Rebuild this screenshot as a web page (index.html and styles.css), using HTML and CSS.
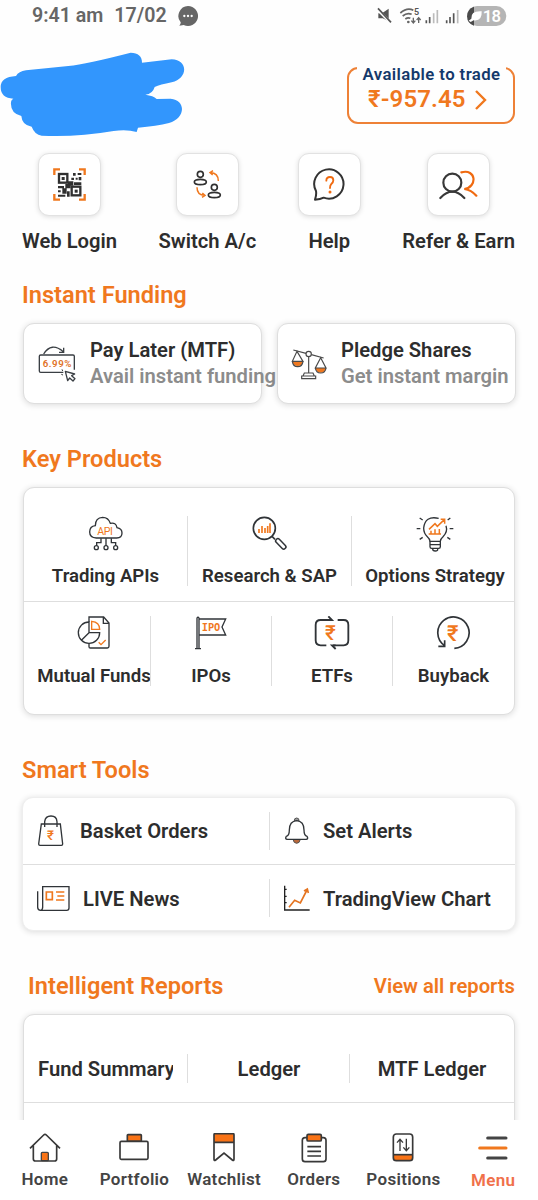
FILE: index.html
```html
<!DOCTYPE html>
<html lang="en">
<head>
    <meta charset="UTF-8">
    <meta name="viewport" content="width=device-width, initial-scale=1">
    <title>Menu</title>
    <link rel="stylesheet" href="styles.css">
</head>
<body>

<main class="screen">
    <!-- Status bar -->
    <div class="status-bar">
        <span class="time">9:41 am</span>
        <span class="date">17/02</span>
        <svg class="chat" width="20" height="20" viewBox="0 0 60 60">
            <path d="M30 0a30 30 0 1 1-13 57L4 59q5-6 4-10A30 30 0 0 1 30 0z" fill="#666"/>
            <g fill="#fff"><circle cx="19" cy="30" r="3.5"/><circle cx="30" cy="30" r="3.5"/><circle cx="41" cy="30" r="3.5"/></g>
        </svg>
        <svg class="signals" width="130" height="22" viewBox="0 0 390 66">
            <g fill="#555">
                <path d="M4 25h11l20-14v38L17 40H4z"/>
                <path d="M0 12l42 42" stroke="#fff" stroke-width="9"/>
                <path d="M3 10l39 42" stroke="#555" stroke-width="5"/>
            </g>
            <g fill="none" stroke="#666" stroke-width="5">
                <path d="M70 24q21-18 39-8"/><path d="M77 33q13-11 27-5"/><path d="M85 42q8-6 15-2"/>
                <path d="M109 38v15m-6-6l6 7 6-7M125 54V38m-6 7l6-7 6 7" stroke-width="4"/>
            </g>
            <circle cx="94" cy="51" r="4" fill="#666"/>
            <text x="111" y="31" font-size="27" font-weight="600" fill="#555">5</text>
            <path d="M148 55V46M158 55V36" stroke="#555" stroke-width="5"/>
            <path d="M170 55V25M181 55V15" stroke="#bbb" stroke-width="5"/>
            <path d="M209 55V46M219 55V36M230 55V25" stroke="#555" stroke-width="5"/>
            <path d="M242 55V15" stroke="#bbb" stroke-width="5"/>
            <rect x="270" y="3" width="118" height="60" rx="30" fill="#b5b5b5"/>
            <path d="M291 5a30 30 0 0 0 0 57z" fill="#4a4a4a"/>
            <path d="M275 47l8-6q-2-24 31-22 2 30-24 27l-9 5z" fill="#fff"/>
            <text x="317" y="51" font-size="50" font-weight="600" fill="#fff" textLength="55">18</text>
        </svg>
    </div>

    <!-- Account name and balance -->
    <div class="account">
        <svg class="scribble" width="185" height="86" viewBox="0 0 555 258">
            <path d="M78 55Q145 48 205 42Q260 36 392 2Q426 3 426 32L515 22C565 23 565 80 515 91Q480 98 464 105Q458 126 436 128Q460 131 470 141L512 140C560 145 556 200 507 213Q470 222 414 227L410 240Q380 231 341 237Q230 256 125 251Q104 248 95 224Q66 220 64 192Q30 184 33 150Q34 142 40 140Q2 138 2 105Q2 75 48 72Q56 58 78 55z" fill="#3296fd"/>
        </svg>
        <div class="balance">
            <span class="balance-label">Available to trade</span>
            <span class="balance-value">₹-957.45
                <svg width="13" height="20" viewBox="0 0 13 20"><path d="M2 1l9 9-9 9" fill="none" stroke="#f0781e" stroke-width="2.4"/></svg>
            </span>
        </div>
    </div>

    <!-- Quick actions -->
    <div class="quick">
        <div class="quick-item">
            <div class="tile">
                <svg width="33" height="33" viewBox="0 0 99 99">
                    <path d="M4 21V4h17M78 4h17v17M95 78v17H78M21 95H4V78" fill="none" stroke="#f0781e" stroke-width="7"/>
                    <g fill="none" stroke="#303030" stroke-width="7">
                        <rect x="18" y="18" width="25" height="26"/>
                        <rect x="56" y="56" width="26" height="26"/>
                    </g>
                    <g fill="#303030">
                        <rect x="26" y="27" width="9" height="9"/><rect x="65" y="65" width="9" height="9"/>
                        <path d="M60 15h8v8h-8zM74 15h11v6H74zM55 29h8v7h-8zM68 29h6v6h-6zM77 27h8v10h-8zM45 40h16v13H45zM63 43h22v8H63zM15 54h18v7H15zM37 48h16v13H37zM15 67h8v6h-8zM28 61h13v16H28zM15 80h22v6H15zM42 70h8v16h-8z"/>
                    </g>
                </svg>
            </div>
            <span>Web Login</span>
        </div>
        <div class="quick-item">
            <div class="tile">
                <svg width="29" height="29" viewBox="0 0 87 87">
                    <g fill="none" stroke="#303030" stroke-width="5">
                        <circle cx="22" cy="13" r="9"/><ellipse cx="22" cy="36" rx="18" ry="8"/>
                        <circle cx="64" cy="52" r="9"/><ellipse cx="64" cy="75" rx="18" ry="8"/>
                    </g>
                    <g fill="none" stroke="#f0781e" stroke-width="4.5">
                        <path d="M52 8Q76 8 76 33M60 2l-9 6 8 7"/>
                        <path d="M12 52Q12 76 35 76M28 69l8 7-9 6"/>
                    </g>
                </svg>
            </div>
            <span>Switch A/c</span>
        </div>
        <div class="quick-item">
            <div class="tile">
                <svg width="33" height="33" viewBox="0 0 99 99">
                    <path d="M9 69A44 44 0 1 1 32 89Q22 94 6 95Q11 80 9 69z" fill="none" stroke="#333" stroke-width="6" stroke-linejoin="round"/>
                    <path d="M40 38q0-11 11-11 10 0 10 10 0 6-6 11-4 4-4 12" fill="none" stroke="#f06a10" stroke-width="5.5" stroke-linecap="round"/>
                    <circle cx="51" cy="72" r="4.5" fill="#f06a10"/>
                </svg>
            </div>
            <span>Help</span>
        </div>
        <div class="quick-item">
            <div class="tile">
                <svg width="39" height="30" viewBox="0 0 117 90">
                    <g fill="none" stroke="#383838" stroke-width="6.5" stroke-linecap="round">
                        <circle cx="40" cy="38" r="27"/><path d="M4 84q36-38 72 0"/>
                    </g>
                    <path d="M67 7C112-5 116 51 76 57Q97 60 112 77" fill="none" stroke="#f06a10" stroke-width="6.5" stroke-linecap="round"/>
                </svg>
            </div>
            <span>Refer &amp; Earn</span>
        </div>
    </div>

    <!-- Instant funding -->
    <h2>Instant Funding</h2>
    <div class="funding">
        <div class="card fund-card">
            <svg width="38" height="38" viewBox="0 0 114 114">
                <g fill="none" stroke="#3a3f44" stroke-width="4">
                    <path d="M76 82H8q-4 0-4-4V34q0-4 4-4h97q4 0 4 4v40"/>
                    <path d="M17 27Q40-10 76 20M77 8v14H63"/>
                    <path d="M82 79l7 28 6-8 10 9 6-7-10-9 9-5z" fill="#fff" stroke-linejoin="round"/>
                    <path d="M70 88l5 2M74 78l-2-5" stroke-width="3"/>
                </g>
                <text x="14" y="67" font-size="29" font-weight="600" fill="#e0701e" textLength="86">6.99%</text>
            </svg>
            <div class="fund-text">
                <strong>Pay Later (MTF)</strong>
                <span>Avail instant funding</span>
            </div>
        </div>
        <div class="card fund-card pledge">
            <svg width="36" height="33" viewBox="0 0 108 99">
                <path d="M4 43h32q-3 14-16 14T4 43zM73 63h32q-3 14-16 14T73 63z" fill="#f0781e"/>
                <g fill="none" stroke="#4a4a4a" stroke-width="3.5">
                    <path d="M7 9l38 10M61 23l37 10M53 28v50"/>
                    <circle cx="53" cy="21" r="8"/>
                    <path d="M18 13L4 43h32zM4 43q2 16 16 16t16-16M89 32L73 63h32zM73 63q2 15 16 15t16-15"/>
                    <path d="M40 78h26l4 9H36zM32 87h42v8H32z"/>
                </g>
            </svg>
            <div class="fund-text">
                <strong>Pledge Shares</strong>
                <span>Get instant margin</span>
            </div>
        </div>
    </div>

    <!-- Key products -->
    <h2 class="key-title">Key Products</h2>
    <div class="card products">
        <div class="row three">
            <div class="cell">
                <svg width="36" height="36" viewBox="0 0 108 108">
                    <g fill="none" stroke="#303438" stroke-width="4">
                        <path d="M25 66Q5 65 5 48q0-17 17-19Q22 5 44 4q17 0 23 18 17-4 20 13 15 3 15 16 0 15-16 15z"/>
                        <path d="M54 67v23M39 67v13H26v9M70 67v13h13v9"/>
                        <circle cx="25" cy="95" r="6"/><circle cx="54" cy="95" r="6"/><circle cx="83" cy="95" r="6"/>
                    </g>
                    <text x="28" y="57" font-size="32" font-weight="400" fill="#f0781e" textLength="47">API</text>
                </svg>
                <span>Trading APIs</span>
            </div>
            <div class="cell">
                <svg width="36" height="36" viewBox="0 0 108 108">
                    <g fill="none" stroke="#303438" stroke-width="5">
                        <circle cx="37" cy="37" r="33"/><path d="M60 61l9 9"/>
                        <rect x="67" y="77" width="38" height="13" rx="6" transform="rotate(46 86 84)" stroke-width="4.5"/>
                    </g>
                    <path d="M21 39v12M30 30v21M39 36v15M47 30v21M54 22v29" stroke="#f0781e" stroke-width="5"/>
                </svg>
                <span>Research &amp; SAP</span>
            </div>
            <div class="cell">
                <svg width="38" height="36" viewBox="0 0 114 108">
                    <g fill="none" stroke="#303438" stroke-width="4">
                        <path d="M68 7Q27-2 23 36q0 16 11 26 8 7 8 14h31q0-7 8-14 15-15 9-33"/>
                        <path d="M42 76v16q0 5 5 5h21q5 0 5-5V76M42 86h31M50 99q0 6 8 6t7-6"/>
                        <path d="M2 38h11M101 38h11M11 6l9 6M95 12l8-6M11 70l9-6M94 64l9 6"/>
                    </g>
                    <path d="M38 54h37M45 54V44M57 54V40M70 54V39M39 40l18-17 7 8 21-20M74 10h12v13" fill="none" stroke="#f0781e" stroke-width="4.5"/>
                </svg>
                <span>Options Strategy</span>
            </div>
        </div>
        <div class="row four">
            <div class="cell">
                <svg width="34" height="36" viewBox="0 0 102 108">
                    <g fill="none" stroke="#303438" stroke-width="4">
                        <path d="M36 18V3h44l16 18v70q0 5-5 5H40q-4 0-4-4V81M79 4v18h17"/>
                        <path d="M36 18A32 32 0 1 0 68 50H36zM36 50L14 72"/>
                    </g>
                    <path d="M44 16v24h24Q68 18 44 16zM65 79l7 7 14-14" fill="none" stroke="#f0781e" stroke-width="4"/>
                </svg>
                <span>Mutual Funds</span>
            </div>
            <div class="cell">
                <svg width="34" height="36" viewBox="0 0 102 108">
                    <path d="M9 98V6q3-5 6 0v92M3 98h18M16 9h79L84 33l11 24H16" fill="none" stroke="#303438" stroke-width="4"/>
                    <text class="mono" x="23" y="46" font-size="31" fill="#f0781e" textLength="56" lengthAdjust="spacingAndGlyphs">IPO</text>
                </svg>
                <span>IPOs</span>
            </div>
            <div class="cell">
                <svg width="36" height="36" viewBox="0 0 108 108">
                    <g fill="none" stroke="#303438" stroke-width="5.5">
                        <path d="M47 12H20Q5 12 5 27v46q0 15 15 15h17M71 12h18q14 0 14 15v46q0 15-14 15H57"/>
                        <path d="M43 1l11 11H43M65 99L54 88h11"/>
                    </g>
                    <text x="33" y="73" font-size="62" font-weight="500" fill="#f0781e">₹</text>
                </svg>
                <span>ETFs</span>
            </div>
            <div class="cell">
                <svg width="36" height="36" viewBox="0 0 108 108">
                    <path d="M26 89A47 47 0 1 1 55 97M7 91h19V73" fill="none" stroke="#303438" stroke-width="5"/>
                    <text x="33" y="74" font-size="66" font-weight="500" fill="#f0781e">₹</text>
                </svg>
                <span>Buyback</span>
            </div>
        </div>
    </div>

    <!-- Smart tools -->
    <h2 class="tools-title">Smart Tools</h2>
    <div class="card tools">
        <div class="tool basket">
            <svg width="26" height="32" viewBox="0 0 78 96">
                <path d="M10 27h57l7 60q0 4-4 4H6q-4 0-4-4zM20 36V20Q22 3 39 3t18 17v16" fill="none" stroke="#303438" stroke-width="4"/>
                <text x="27" y="75" font-size="40" font-weight="500" fill="#f0781e">₹</text>
            </svg>
            <span>Basket Orders</span>
        </div>
        <div class="tool alerts">
            <svg width="24" height="28" viewBox="0 0 72 84">
                <path d="M24 67h22q-2 12-11 12T24 67z" fill="#b9683a" stroke="#555" stroke-width="3"/>
                <path d="M28 12q-1-9 7-9t7 9z" fill="#999" stroke="#555" stroke-width="3"/>
                <path d="M35 11Q13 13 13 39q0 17-9 19-5 8 3 9h56q8-1 3-9-9-2-9-19 0-26-22-28z" fill="#fff" stroke="#303438" stroke-width="4"/>
            </svg>
            <span>Set Alerts</span>
        </div>
        <div class="tool news">
            <svg width="33" height="27" viewBox="0 0 99 81">
                <path d="M17 68V5h79v64q0 7-7 7H11q-9 0-9-9V19M17 66q0 9-6 10" fill="none" stroke="#303438" stroke-width="4"/>
                <path d="M28 21h18v23H28zM57 21h25M61 33h21M57 45h25" fill="none" stroke="#f0781e" stroke-width="5"/>
            </svg>
            <span>LIVE News</span>
        </div>
        <div class="tool chart">
            <svg width="27" height="27" viewBox="0 0 81 81">
                <path d="M5 2v73h75M5 13h6M5 34h6M5 53h6" fill="none" stroke="#222" stroke-width="4"/>
                <path d="M18 67l17-21 17 8 20-39M63 18l10-6 3 12" fill="none" stroke="#e57420" stroke-width="5"/>
            </svg>
            <span>TradingView Chart</span>
        </div>
    </div>

    <!-- Reports -->
    <div class="reports-head">
        <h2>Intelligent Reports</h2>
        <a>View all reports</a>
    </div>
    <div class="card reports">
        <div class="report"><span>Fund Summary</span></div>
        <div class="report"><span>Ledger</span></div>
        <div class="report"><span>MTF Ledger</span></div>
    </div>
</main>

<!-- Bottom navigation -->
<nav class="bottom-nav">
    <div class="nav-item">
        <svg width="32" height="30" viewBox="0 0 96 90">
            <rect x="37" y="58" width="21" height="25" rx="3" fill="#f97316" stroke="#444" stroke-width="4"/>
            <path d="M3 46L44 6q4-4 8 0l41 40M13 38v40q0 6 6 6h58q6 0 6-6V38" fill="none" stroke="#383838" stroke-width="5"/>
        </svg>
        <span>Home</span>
    </div>
    <div class="nav-item">
        <svg width="30" height="30" viewBox="0 0 90 90">
            <g stroke="#383838" stroke-width="5">
                <rect x="25" y="5" width="42" height="20" rx="2" fill="#f97316"/>
                <rect x="3" y="25" width="84" height="54" rx="4" fill="#fff"/>
            </g>
        </svg>
        <span>Portfolio</span>
    </div>
    <div class="nav-item">
        <svg width="22" height="30" viewBox="0 0 66 90">
            <path d="M3 28V4q0-3 3-3h54q3 0 3 3v24z" fill="#f97316"/>
            <path d="M3 28h60M6 2h54q3 0 3 3v74q0 6-5 2L33 60 8 81q-5 4-5-2V5q0-3 3-3z" fill="none" stroke="#383838" stroke-width="5"/>
        </svg>
        <span>Watchlist</span>
    </div>
    <div class="nav-item">
        <svg width="26" height="30" viewBox="0 0 78 90">
            <g stroke="#383838" stroke-width="5">
                <rect x="4" y="14" width="71" height="72" rx="8" fill="#fff"/>
                <rect x="18" y="4" width="43" height="20" rx="4" fill="#f97316"/>
                <path d="M19 41h41M19 55h41M19 69h41"/>
            </g>
        </svg>
        <span>Orders</span>
    </div>
    <div class="nav-item">
        <svg width="22" height="30" viewBox="0 0 66 90">
            <path d="M3 65h60v9q0 9-9 9H12q-9 0-9-9z" fill="#f97316"/>
            <g fill="none" stroke="#383838" stroke-width="5">
                <rect x="4" y="3" width="58" height="80" rx="9"/><path d="M4 65h58"/>
                <path d="M24 54V20M15 29l9-10 9 10M43 17v36M34 43l9 10 9-10" stroke-width="4"/>
            </g>
        </svg>
        <span>Positions</span>
    </div>
    <div class="nav-item active">
        <svg width="30" height="30" viewBox="0 0 90 90">
            <g stroke-width="9" stroke-linecap="round">
                <path d="M29 15h55M29 75h55" stroke="#444"/>
                <path d="M5 45h79" stroke="#f0781e"/>
            </g>
        </svg>
        <span>Menu</span>
    </div>
</nav>

</body>
</html>
```

FILE: styles.css
```css
* {
    box-sizing: border-box;
}

body {
    font-family: Roboto, "Noto Sans", sans-serif;
    font-size: 20.2px;
    font-weight: 600;
    line-height: 24px;
    color: #2d2d2d;
    background-color: #fefefe;
    margin: 0;
    height: 1200px;
    display: flex;
    flex-direction: column;
    overflow: hidden;
}

svg {
    display: block;
    flex: none;
}

svg text {
    font-family: Roboto, "Noto Sans", sans-serif;
}

svg .mono {
    font-family: "DejaVu Sans Mono", monospace;
    font-weight: bold;
}

.screen {
    height: 1120px;
    overflow: hidden;
    white-space: nowrap;
}

/* Status bar */
.status-bar {
    height: 32px;
    padding: 0 31px 0 32px;
    display: flex;
    align-items: center;
    color: #666;
    font-size: 19.6px;
    font-weight: 600;
}

.date {
    margin-left: 11px;
}

.chat {
    margin-left: 11px;
}

.signals {
    margin-left: auto;
}

/* Account */
.account {
    height: 121px;
    padding: 20px 23px 0 0;
    display: flex;
    justify-content: space-between;
    align-items: flex-start;
}

.balance {
    position: relative;
    width: 168px;
    height: 57px;
    margin-top: 15px;
    border: 2px solid #ee8136;
    border-radius: 11px;
}

/* Label sits over the top border */
.balance-label {
    position: absolute;
    top: -7px;
    left: 8px;
    width: 149px;
    line-height: 24px;
    text-align: center;
    background-color: #fefefe;
    color: #14396b;
    font-size: 16.8px;
    letter-spacing: 0.4px;
}

.balance-value {
    display: flex;
    align-items: center;
    gap: 8px;
    padding: 17px 0 0 19px;
    line-height: 27px;
    font-size: 24px;
    letter-spacing: 0.1px;
    color: #f0781e;
}

/* Quick actions */
.quick {
    height: 101px;
    padding: 0 23px 0 22px;
    display: flex;
    justify-content: space-between;
}

.quick-item {
    display: flex;
    flex-direction: column;
    align-items: center;
    gap: 13px;
}

.tile {
    width: 63px;
    height: 63px;
    display: flex;
    align-items: center;
    justify-content: center;
    border: 1px solid #e2e2e2;
    border-radius: 11px;
    background-color: #fff;
    box-shadow: 0 1px 5px rgba(0, 0, 0, 0.13);
}

h2 {
    margin: 27px 0 14px 22px;
    font-size: 23.6px;
    font-weight: 600;
    line-height: 28px;
    color: #f0781e;
}

.card {
    background-color: #fff;
    border: 1px solid #dedede;
    border-radius: 11px;
    box-shadow: 0 1px 6px rgba(0, 0, 0, 0.14);
}

/* Instant funding */
.funding {
    display: grid;
    grid-template-columns: 239px 239px;
    gap: 15px;
    padding-left: 23px;
}

.fund-card {
    height: 81px;
    display: flex;
    align-items: center;
    padding-left: 14px;
}

.pledge {
    padding-left: 13px;
}

.fund-text {
    display: flex;
    flex-direction: column;
    margin: -2px 0 0 14px;
    line-height: 26px;
}

.fund-text strong {
    font-weight: 600;
}

.fund-text span {
    color: #8c8c8c;
}

/* Key products */
.key-title {
    margin-top: 41px;
}

.products {
    width: 492px;
    height: 228px;
    margin-left: 23px;
}

.row {
    display: grid;
}

.three {
    height: 114px;
    padding-top: 28px;
    grid-template-columns: 164px 164px 162px;
    border-bottom: 1px solid #dedede;
}

.four {
    padding-top: 14px;
    grid-template-columns: 127px 121px 121px 121px;
}

.cell {
    height: 70px;
    display: flex;
    flex-direction: column;
    align-items: center;
    justify-content: space-between;
    border-right: 1px solid #dedede;
}

.cell:last-child {
    border-right: none;
}

.cell span {
    margin-bottom: -2px;
    font-size: 18.6px;
}

.three .cell:last-child {
    padding-left: 4px;
}

.four .cell:first-child {
    padding-left: 14px;
    overflow: hidden;
}

/* Smart tools */
.tools-title {
    margin-top: 41px;
    margin-bottom: 13px;
}

.tools {
    width: 494px;
    height: 134px;
    margin-left: 22px;
    display: grid;
    grid-template: 67px 67px / 247px 245px;
    border-color: #eee;
}

.tool {
    display: flex;
    align-items: center;
    padding-left: 15px;
    background: linear-gradient(#dedede, #dedede) right 14px / 1px 38px no-repeat;
}

.alerts,
.chart {
    background: none;
}

.basket,
.alerts {
    border-bottom: 1px solid #dedede;
}

.basket span {
    margin-left: 16px;
}

.alerts span {
    margin-left: 14px;
}

.news {
    padding-left: 14px;
}

.news span {
    margin-left: 13px;
}

.chart {
    padding-left: 13px;
}

.chart span {
    margin-left: 13px;
}

/* Reports */
.reports-head {
    display: flex;
    justify-content: space-between;
    align-items: center;
    margin: 41px 23px 14px 28px;
}

.reports-head h2 {
    margin: 0;
}

.reports-head a {
    color: #f0781e;
}

.reports {
    width: 492px;
    height: 160px;
    margin-left: 23px;
    padding-top: 39px;
    display: grid;
    grid-template-columns: 164px 162px 164px;
    align-content: start;
}

.report {
    height: 49px;
    border-bottom: 1px solid #dedede;
    text-align: center;
    line-height: 30px;
    background: linear-gradient(#dedede, #dedede) right top / 1px 29px no-repeat;
}

.report:last-child {
    background: none;
}

.report:first-child {
    padding: 0 15px 0 14px;
    text-align: left;
}

.report:first-child span {
    display: block;
    overflow: hidden;
}

/* Bottom navigation */
.bottom-nav {
    height: 80px;
    padding-top: 13px;
    display: grid;
    grid-template-columns: repeat(6, 1fr);
    background-color: #fff;
    font-size: 17px;
    letter-spacing: 0.3px;
    color: #444;
}

.nav-item {
    display: flex;
    flex-direction: column;
    align-items: center;
    gap: 4px;
}

.nav-item.active {
    color: #f0704a;
    gap: 5px;
}
```
